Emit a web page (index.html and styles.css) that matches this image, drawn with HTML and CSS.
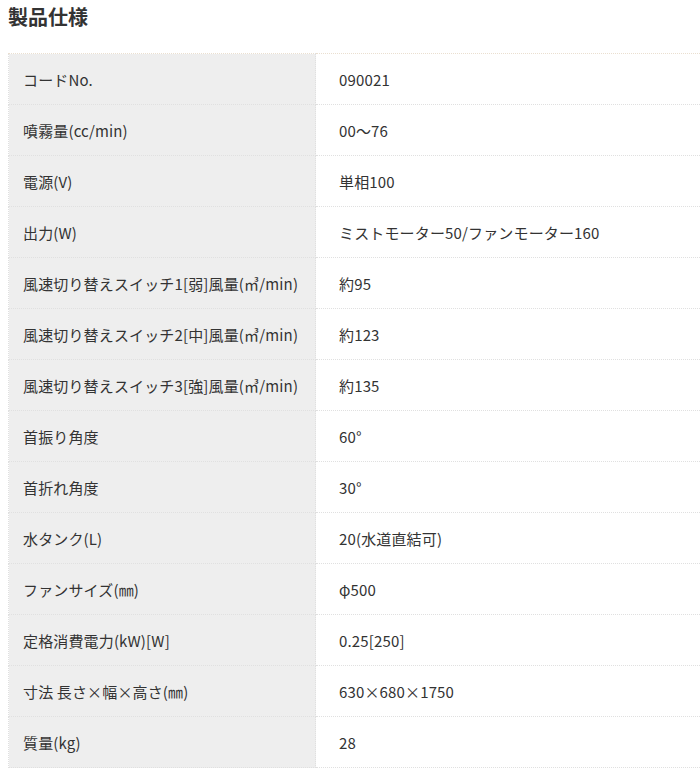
FILE: index.html
```html
<!DOCTYPE html>
<html lang="ja">
<head>
    <meta charset="UTF-8">
    <meta name="viewport" content="width=device-width, initial-scale=1.0">
    <title>製品仕様</title>
    <link rel="stylesheet" href="styles.css">
</head>
<body>
    <section class="spec">
        <h2 class="spec-title">製品仕様</h2>
        <table class="spec-table">
            <tr><th>コードNo.</th><td>090021</td></tr>
            <tr><th>噴霧量(cc/min)</th><td>00～76</td></tr>
            <tr><th>電源(V)</th><td>単相100</td></tr>
            <tr><th>出力(W)</th><td>ミストモーター50/ファンモーター160</td></tr>
            <tr><th>風速切り替えスイッチ1[弱]風量(㎥/min)</th><td>約95</td></tr>
            <tr><th>風速切り替えスイッチ2[中]風量(㎥/min)</th><td>約123</td></tr>
            <tr><th>風速切り替えスイッチ3[強]風量(㎥/min)</th><td>約135</td></tr>
            <tr><th>首振り角度</th><td>60°</td></tr>
            <tr><th>首折れ角度</th><td>30°</td></tr>
            <tr><th>水タンク(L)</th><td>20(水道直結可)</td></tr>
            <tr><th>ファンサイズ(㎜)</th><td>φ500</td></tr>
            <tr><th>定格消費電力(kW)[W]</th><td>0.25[250]</td></tr>
            <tr><th>寸法 長さ×幅×高さ(㎜)</th><td>630×680×1750</td></tr>
            <tr><th>質量(kg)</th><td>28</td></tr>
        </table>
    </section>
</body>
</html>
```

FILE: styles.css
```css
body {
    margin: 0;
    font-family: "Noto Sans CJK JP", "Noto Sans", sans-serif;
    color: #333;
    background: #fff;
}
.spec {
    padding-left: 8px;
}
.spec-title {
    margin: 0;
    font-size: 20px;
    line-height: 34px;
    font-weight: bold;
    color: #333;
}
.spec-table {
    width: 100%;
    margin-top: 19px;
    border-collapse: collapse;
    font-size: 15px;
    line-height: 20px;
    letter-spacing: 0.15px;
}
.spec-table tr:first-child th,
.spec-table tr:first-child td {
    border-top: 1px dotted #eadfd0;
}
.spec-table th,
.spec-table td {
    border-bottom: 1px dotted #e0e0e0;
    padding: 16px 0 14px;
    text-align: left;
    font-weight: normal;
    vertical-align: middle;
}
.spec-table th {
    width: 292px;
    padding-left: 14px;
    background-color: #eeeeee;
    border-left: 1px dotted #e0e0e0;
    border-right: 1px dotted #e0e0e0;
}
.spec-table td {
    padding-left: 23px;
}
```
